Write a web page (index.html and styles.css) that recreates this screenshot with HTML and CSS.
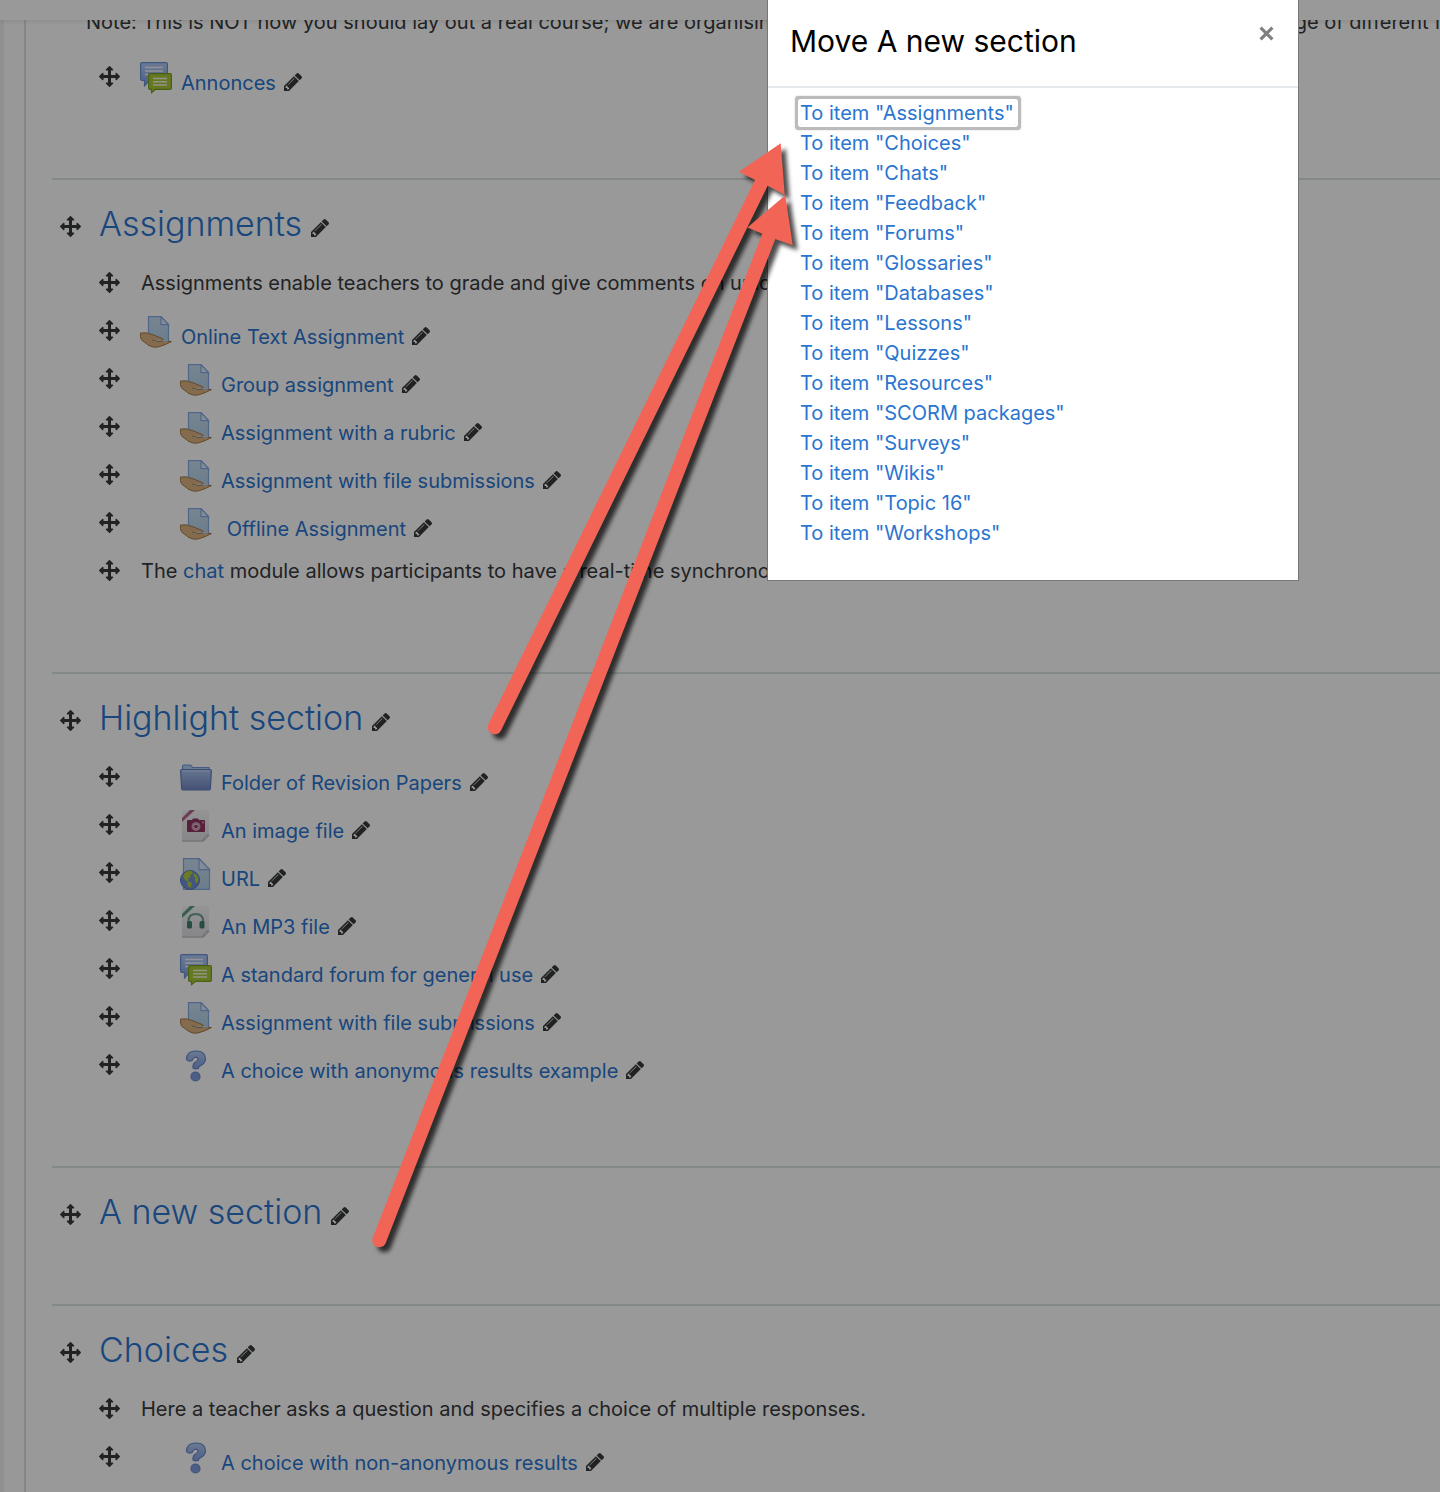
FILE: index.html
```html
<!DOCTYPE html>
<html lang="en">
<head>
  <meta charset="UTF-8" />
  <meta name="viewport" content="width=device-width, initial-scale=1.0"/>
  <title>Move A new section</title>
  <link rel="stylesheet" href="styles.css">
</head>
<body>
  <!-- Icon sprite -->
  <svg class="sprite" aria-hidden="true">
    <defs>
      <linearGradient id="gPaper" x1="0" y1="0" x2="0" y2="1">
        <stop offset="0" stop-color="#c9dff0"/><stop offset="1" stop-color="#b3d0ea"/>
      </linearGradient>
      <linearGradient id="gBlue" x1="0" y1="0" x2="0" y2="1">
        <stop offset="0" stop-color="#b4cdf5"/><stop offset="1" stop-color="#7f9ee0"/>
      </linearGradient>
      <linearGradient id="gFolder" x1="0" y1="0" x2="0" y2="1">
        <stop offset="0" stop-color="#a9c3ee"/><stop offset="1" stop-color="#7388c4"/>
      </linearGradient>
      <linearGradient id="gFile" x1="0" y1="0" x2="0" y2="1">
        <stop offset="0" stop-color="#f6f6f8"/><stop offset="1" stop-color="#e0e0e4"/>
      </linearGradient>
      <symbol id="move" viewBox="0 0 1792 1792">
        <path d="M1792 896q0 26-19 45l-256 256q-19 19-45 19t-45-19-19-45v-128h-384v384h128q26 0 45 19t19 45-19 45l-256 256q-19 19-45 19t-45-19l-256-256q-19-19-19-45t19-45 45-19h128v-384h-384v128q0 26-19 45t-45 19-45-19l-256-256q-19-19-19-45t19-45l256-256q19-19 45-19t45 19 19 45v128h384v-384h-128q-26 0-45-19t-19-45 19-45l256-256q19-19 45-19t45 19l256 256q19 19 19 45t-19 45-45 19h-128v384h384v-128q0-26 19-45t45-19 45 19l256 256q19 19 19 45z"/>
      </symbol>
      <symbol id="pencil" viewBox="128 149 1515 1515">
        <path d="M491 1536l91-91-235-235-91 91v107h128v128h107zm523-928q0-22-22-22-10 0-17 7l-542 542q-7 7-7 17 0 22 22 22 10 0 17-7l542-542q7-7 7-17zm-54-192l416 416-832 832h-416v-416zm683 96q0 53-37 90l-166 166-416-416 166-165q36-38 90-38 53 0 91 38l235 234q37 39 37 91z"/>
      </symbol>
      <symbol id="forum" viewBox="0 0 32 32">
        <path d="M2 .6h24q1.400 0 1.400 1.400v15q0 1.400-1.400 1.400H9.500L4.500 24v-5.600H2Q.6 18.400.6 17V2Q.6.600 2 .600z" fill="url(#gBlue)" stroke="#6a8fd8" stroke-width="1.200"/>
        <path d="M5 5.500h18M5 9h18M5 12.500h5" stroke="#f2f6fd" stroke-width="1.500"/>
        <path d="M10 11.600h20q1.400 0 1.400 1.400v13q0 1.400-1.400 1.400H15.500l-4 3.300v-3.300H10q-1.400 0-1.400-1.400V13q0-1.400 1.400-1.400z" fill="#a9c83a" stroke="#7da01f" stroke-width="1.200"/>
        <path d="M13 16.500h14M13 19.800h14M13 23h14" stroke="#f3f8dd" stroke-width="1.500"/>
      </symbol>
      <symbol id="assign" viewBox="0 0 32 32">
        <path d="M8.500.6H21l7.500 8V25h-20z" fill="url(#gPaper)" stroke="#86a8e6" stroke-width="1.200"/>
        <path d="M21 .600v8h7.500z" fill="#dcecf8" stroke="#86a8e6" stroke-width="1.200"/>
        <path d="M.6 17Q7 16 12 18.500l9 3.500q3.500 1 1.500 3l9 .500q-6 3.500-13.500 5.500-5 1-9-1.500L1.500 24Q-.2 20 .6 17z" fill="#dcb381" stroke="#a87b48" stroke-width="1"/>
        <path d="M13 24.800h15" stroke="#c3d8ee" stroke-width="1.500"/>
        <path d="M12 24q6 2.500 11 1.200" fill="none" stroke="#a87b48" stroke-width="1"/>
      </symbol>
      <symbol id="folder" viewBox="0 0 32 32">
        <path d="M2.600 8V4q0-1 1-1H10q1 0 1.500 1l1 1.500H29V9z" fill="#aed1f1" stroke="#7795da" stroke-width="1.200"/>
        <path d="M.6 9q0-1.500 1.400-1.500h28q1.400 0 1.400 1.500l-1 17.500q0 1.500-1.400 1.500H3q-1.400 0-1.400-1.500z" fill="url(#gFolder)" stroke="#6580c4" stroke-width="1.200"/>
        <path d="M2 9h28" stroke="#c3d7f7" stroke-width="1"/>
      </symbol>
      <symbol id="image" viewBox="0 0 32 32">
        <path d="M2 0h27v25l-6 6.500H2z" fill="url(#gFile)"/>
        <path d="M2 31h21l6-6" fill="none" stroke="#c9c9ce" stroke-width="1.500"/>
        <path d="M28.500 25q-4 0-5.500 6z" fill="#fff" stroke="#b5b5ba"/>
        <path d="M2 12V8L10 0h5z" fill="#b5688c"/>
        <path d="M8 10h4l1-1.500h5L19 10h5q1 0 1 1v10q0 1-1 1H8q-1 0-1-1V11q0-1 1-1z" fill="#8f3464"/>
        <circle cx="16" cy="16.500" r="4.500" fill="#cf9ab5"/>
        <circle cx="16" cy="16.500" r="2.300" fill="#8f3464" stroke="#e6c6d6"/>
        <circle cx="23" cy="12.500" r="1" fill="#dba6c0"/>
      </symbol>
      <symbol id="audio" viewBox="0 0 32 32">
        <path d="M2 0h27v25l-6 6.500H2z" fill="url(#gFile)"/>
        <path d="M2 31h21l6-6" fill="none" stroke="#c9c9ce" stroke-width="1.500"/>
        <path d="M28.500 25q-4 0-5.500 6z" fill="#fff" stroke="#b5b5ba"/>
        <path d="M2 12V8L10 0h5z" fill="#5f9c8b"/>
        <path d="M8.500 18v-3q0-7 7.300-7t7.300 7v3" fill="none" stroke="#6f9f92" stroke-width="2"/>
        <rect x="7" y="15" width="5" height="7.500" rx="1.500" fill="#42816f"/>
        <rect x="19.500" y="15" width="5" height="7.500" rx="1.500" fill="#42816f"/>
      </symbol>
      <symbol id="url" viewBox="0 0 32 32">
        <path d="M3.500.6H19l10.500 11v19.800h-26z" fill="url(#gPaper)" stroke="#86a8e6" stroke-width="1.200"/>
        <path d="M19 .600v11h10.500z" fill="#dcecf8" stroke="#86a8e6" stroke-width="1.200"/>
        <circle cx="10" cy="22" r="9.500" fill="#6d8fd6" stroke="#5b78bd"/>
        <path d="M3 18q2.500-5.500 8-5.300l2 2.300-3 2.500 1 2-3 .500 1 2.500-2.500.500q-2-1-3.500-5zM7.500 23l4.500 2-1.500 5-3-2.500zM14.500 15q4 2.500 4 7.500l-2 3-2-3.500 1-2-2-2z" fill="#b5cf3a"/>
      </symbol>
      <symbol id="choice" viewBox="0 0 32 32">
        <path d="M6.500 9.500Q6.500 1 16 1q9.500 0 9.500 8 0 4.500-5.500 7-2 1-1.500 2.500-3.500 1-5.500-.500-.5-5 3.500-6.500 2-1 1.500-3Q17 6.500 14.500 7.500q-2 1-2.500 3-3.500 1.500-5.500-1z" fill="url(#gBlue)" stroke="#6a87cf" stroke-width="1.200"/>
        <circle cx="15.500" cy="26.500" r="4.500" fill="#7f9de0" stroke="#6a87cf" stroke-width="1.200"/>
      </symbol>
    </defs>
  </svg>

  <header class="navbar"></header>

  <main class="course">
    <section class="section">
      <p class="summary">Note: This is NOT how you should lay out a real course; we are organising it this way so that you can explore the whole wide range of different features</p>
      <ul class="activities">
        <li class="activity">
          <button class="move" aria-label="Move"><svg><use href="#move"/></svg></button>
          <svg class="modicon"><use href="#forum"/></svg>
          <a class="name" href="#">Annonces</a>
          <button class="edit" aria-label="Edit title"><svg><use href="#pencil"/></svg></button>
        </li>
      </ul>
    </section>

    <section class="section">
      <div class="section-head">
        <button class="move" aria-label="Move section"><svg><use href="#move"/></svg></button>
        <h3><a href="#">Assignments</a></h3>
        <button class="edit" aria-label="Edit section name"><svg><use href="#pencil"/></svg></button>
      </div>
      <ul class="activities">
        <li class="activity">
          <button class="move" aria-label="Move"><svg><use href="#move"/></svg></button>
          <p class="label">Assignments enable teachers to grade and give comments on uploads</p>
        </li>
        <li class="activity">
          <button class="move" aria-label="Move"><svg><use href="#move"/></svg></button>
          <svg class="modicon"><use href="#assign"/></svg>
          <a class="name" href="#">Online Text Assignment</a>
          <button class="edit" aria-label="Edit title"><svg><use href="#pencil"/></svg></button>
        </li>
        <li class="activity indent">
          <button class="move" aria-label="Move"><svg><use href="#move"/></svg></button>
          <svg class="modicon"><use href="#assign"/></svg>
          <a class="name" href="#">Group assignment</a>
          <button class="edit" aria-label="Edit title"><svg><use href="#pencil"/></svg></button>
        </li>
        <li class="activity indent">
          <button class="move" aria-label="Move"><svg><use href="#move"/></svg></button>
          <svg class="modicon"><use href="#assign"/></svg>
          <a class="name" href="#">Assignment with a rubric</a>
          <button class="edit" aria-label="Edit title"><svg><use href="#pencil"/></svg></button>
        </li>
        <li class="activity indent">
          <button class="move" aria-label="Move"><svg><use href="#move"/></svg></button>
          <svg class="modicon"><use href="#assign"/></svg>
          <a class="name" href="#">Assignment with file submissions</a>
          <button class="edit" aria-label="Edit title"><svg><use href="#pencil"/></svg></button>
        </li>
        <li class="activity indent">
          <button class="move" aria-label="Move"><svg><use href="#move"/></svg></button>
          <svg class="modicon"><use href="#assign"/></svg>
          <a class="name" href="#">&nbsp;Offline Assignment</a>
          <button class="edit" aria-label="Edit title"><svg><use href="#pencil"/></svg></button>
        </li>
        <li class="activity">
          <button class="move" aria-label="Move"><svg><use href="#move"/></svg></button>
          <p class="label">The <a href="#">chat</a> module allows participants to have a real-time synchronous discussion</p>
        </li>
      </ul>
    </section>

    <section class="section">
      <div class="section-head">
        <button class="move" aria-label="Move section"><svg><use href="#move"/></svg></button>
        <h3><a href="#">Highlight section</a></h3>
        <button class="edit" aria-label="Edit section name"><svg><use href="#pencil"/></svg></button>
      </div>
      <ul class="activities">
        <li class="activity indent">
          <button class="move" aria-label="Move"><svg><use href="#move"/></svg></button>
          <svg class="modicon"><use href="#folder"/></svg>
          <a class="name" href="#">Folder of Revision Papers</a>
          <button class="edit" aria-label="Edit title"><svg><use href="#pencil"/></svg></button>
        </li>
        <li class="activity indent">
          <button class="move" aria-label="Move"><svg><use href="#move"/></svg></button>
          <svg class="modicon"><use href="#image"/></svg>
          <a class="name" href="#">An image file</a>
          <button class="edit" aria-label="Edit title"><svg><use href="#pencil"/></svg></button>
        </li>
        <li class="activity indent">
          <button class="move" aria-label="Move"><svg><use href="#move"/></svg></button>
          <svg class="modicon"><use href="#url"/></svg>
          <a class="name" href="#">URL</a>
          <button class="edit" aria-label="Edit title"><svg><use href="#pencil"/></svg></button>
        </li>
        <li class="activity indent">
          <button class="move" aria-label="Move"><svg><use href="#move"/></svg></button>
          <svg class="modicon"><use href="#audio"/></svg>
          <a class="name" href="#">An MP3 file</a>
          <button class="edit" aria-label="Edit title"><svg><use href="#pencil"/></svg></button>
        </li>
        <li class="activity indent">
          <button class="move" aria-label="Move"><svg><use href="#move"/></svg></button>
          <svg class="modicon"><use href="#forum"/></svg>
          <a class="name" href="#">A standard forum for general use</a>
          <button class="edit" aria-label="Edit title"><svg><use href="#pencil"/></svg></button>
        </li>
        <li class="activity indent">
          <button class="move" aria-label="Move"><svg><use href="#move"/></svg></button>
          <svg class="modicon"><use href="#assign"/></svg>
          <a class="name" href="#">Assignment with file submissions</a>
          <button class="edit" aria-label="Edit title"><svg><use href="#pencil"/></svg></button>
        </li>
        <li class="activity indent">
          <button class="move" aria-label="Move"><svg><use href="#move"/></svg></button>
          <svg class="modicon"><use href="#choice"/></svg>
          <a class="name" href="#">A choice with anonymous results example</a>
          <button class="edit" aria-label="Edit title"><svg><use href="#pencil"/></svg></button>
        </li>
      </ul>
    </section>

    <section class="section">
      <div class="section-head">
        <button class="move" aria-label="Move section"><svg><use href="#move"/></svg></button>
        <h3><a href="#">A new section</a></h3>
        <button class="edit" aria-label="Edit section name"><svg><use href="#pencil"/></svg></button>
      </div>
    </section>

    <section class="section">
      <div class="section-head">
        <button class="move" aria-label="Move section"><svg><use href="#move"/></svg></button>
        <h3><a href="#">Choices</a></h3>
        <button class="edit" aria-label="Edit section name"><svg><use href="#pencil"/></svg></button>
      </div>
      <ul class="activities">
        <li class="activity">
          <button class="move" aria-label="Move"><svg><use href="#move"/></svg></button>
          <p class="label">Here a teacher asks a question and specifies a choice of multiple responses.</p>
        </li>
        <li class="activity indent">
          <button class="move" aria-label="Move"><svg><use href="#move"/></svg></button>
          <svg class="modicon"><use href="#choice"/></svg>
          <a class="name" href="#">A choice with non-anonymous results</a>
          <button class="edit" aria-label="Edit title"><svg><use href="#pencil"/></svg></button>
        </li>
      </ul>
    </section>
  </main>

  <div class="backdrop"></div>

  <div class="modal" role="dialog" aria-labelledby="modalTitle">
    <div class="modal-header">
      <h2 id="modalTitle">Move A new section</h2>
      <button class="close" aria-label="Close">
        <svg viewBox="0 0 14 14"><path d="M1.500 1.500l11 11M12.500 1.500l-11 11"/></svg>
      </button>
    </div>
    <ul class="modal-list">
      <li><a class="focused" href="#">To item "Assignments"</a></li>
      <li><a href="#">To item "Choices"</a></li>
      <li><a href="#">To item "Chats"</a></li>
      <li><a href="#">To item "Feedback"</a></li>
      <li><a href="#">To item "Forums"</a></li>
      <li><a href="#">To item "Glossaries"</a></li>
      <li><a href="#">To item "Databases"</a></li>
      <li><a href="#">To item "Lessons"</a></li>
      <li><a href="#">To item "Quizzes"</a></li>
      <li><a href="#">To item "Resources"</a></li>
      <li><a href="#">To item "SCORM packages"</a></li>
      <li><a href="#">To item "Surveys"</a></li>
      <li><a href="#">To item "Wikis"</a></li>
      <li><a href="#">To item "Topic 16"</a></li>
      <li><a href="#">To item "Workshops"</a></li>
    </ul>
  </div>

  <!-- Annotation arrows -->
  <svg class="arrows" width="820" height="1270" viewBox="0 0 820 1270" aria-hidden="true">
    <path d="M780.700 143.300L739 171.700L755 180L488.400 724.200A7 7 0 0 0 501 730.400L767.700 185.700L784.700 194.700z"/>
    <path d="M785.300 195.300L747.500 227.500L762.300 233.700L372.500 1238.500A7 7 0 0 0 385.500 1243.500L775.300 239L792.700 245.300z"/>
  </svg>
</body>
</html>
```
FILE: styles.css
```css
:root {
  --link: #2a75cf;
  --text: #373a3c;
  --line: #d9e4e2;
}
* { box-sizing: border-box; }
body {
  margin: 0;
  position: relative;
  min-height: 100vh;
  overflow: hidden;
  display: flex;
  flex-direction: column;
  background: #f0f0f0;
  color: var(--text);
  font-family: Inter, sans-serif;
  font-size: 20px;
  line-height: 30px;
}
a { color: var(--link); text-decoration: none; }
ul { list-style: none; margin: 0; padding: 0; }
h2, h3, p { margin: 0; }
button {
  display: flex;
  padding: 0;
  border: none;
  background: none;
  color: inherit;
  cursor: pointer;
}
svg { display: block; fill: currentColor; }
.sprite { position: absolute; width: 0; height: 0; }

.navbar {
  position: absolute;
  top: 0;
  left: 0;
  right: 0;
  height: 20px;
  background: #fff;
  box-shadow: 0 2px 4px rgba(0, 0, 0, 0.08);
}

/* Course page */
.course {
  flex: 1;
  margin-left: 4px;
  padding-left: 26px;
  background: linear-gradient(to right, #fdfdfd 20px, #e0e0e0 20px, #e0e0e0 22px, #fff 22px);
}
.section {
  margin-left: 22px;
  padding-bottom: 58px;
  border-bottom: 2px solid var(--line);
}
.section:last-child { border-bottom: none; padding-bottom: 0; }
.summary {
  height: 52px;
  padding: 7px 0 0 34px;
  white-space: nowrap;
  overflow: hidden;
}
.section-head {
  display: flex;
  align-items: center;
  height: 66px;
  padding: 26px 0 0 8px;
  margin-bottom: 12px;
}
.section-head h3 {
  margin: 0 9px 4px 18px;
  font-size: 34px;
  font-weight: 300;
  line-height: 40px;
}
.section-head .edit { padding-top: 4px; }
.activities { padding: 0 0 20px 47px; }
.activity {
  display: flex;
  align-items: center;
  height: 48px;
  white-space: nowrap;
}
.move svg { width: 21px; height: 21px; }
.edit svg { width: 18px; height: 18px; }
.label { margin-left: 21px; padding-top: 2px; }
.modicon {
  width: 32px;
  height: 32px;
  margin: 4px 9px 0 20px;
}
.indent .modicon { margin-left: 60px; }
.name { padding-top: 14px; }
.activity .edit { padding-top: 12px; margin-left: 8px; }

/* Dialog */
.backdrop {
  position: absolute;
  inset: 0;
  background: rgba(0, 0, 0, 0.4);
}
.modal {
  position: absolute;
  top: 0;
  right: 141px;
  width: 532px;
  background: #fff;
  border: 1px solid #777;
  border-top: none;
}
.modal-header {
  display: flex;
  justify-content: space-between;
  align-items: flex-start;
  height: 88px;
  padding: 20px 24px 0 22px;
  border-bottom: 2px solid #e5e9ec;
}
.modal-header h2 {
  color: #000;
  font-size: 30px;
  font-weight: 400;
  line-height: 42px;
}
.close { margin-top: 6px; color: #808080; }
.close svg { width: 15px; height: 15px; fill: none; stroke: currentColor; stroke-width: 3; }
.modal-list { padding: 10px 32px 32px; }
.modal-list li { display: flex; align-items: center; height: 30px; }
.focused {
  line-height: 24px;
  padding-right: 2px;
  border-radius: 1px;
  box-shadow: 0 0 0 2px #fff, 0 0 0 5px #bbb, 0 0 2px 5px #ccc;
}

.arrows {
  position: absolute;
  top: 0;
  left: 0;
  fill: #f26556;
  pointer-events: none;
}
.arrows path { filter: drop-shadow(5px 5px 2px rgba(0, 0, 0, 0.7)); }
```
